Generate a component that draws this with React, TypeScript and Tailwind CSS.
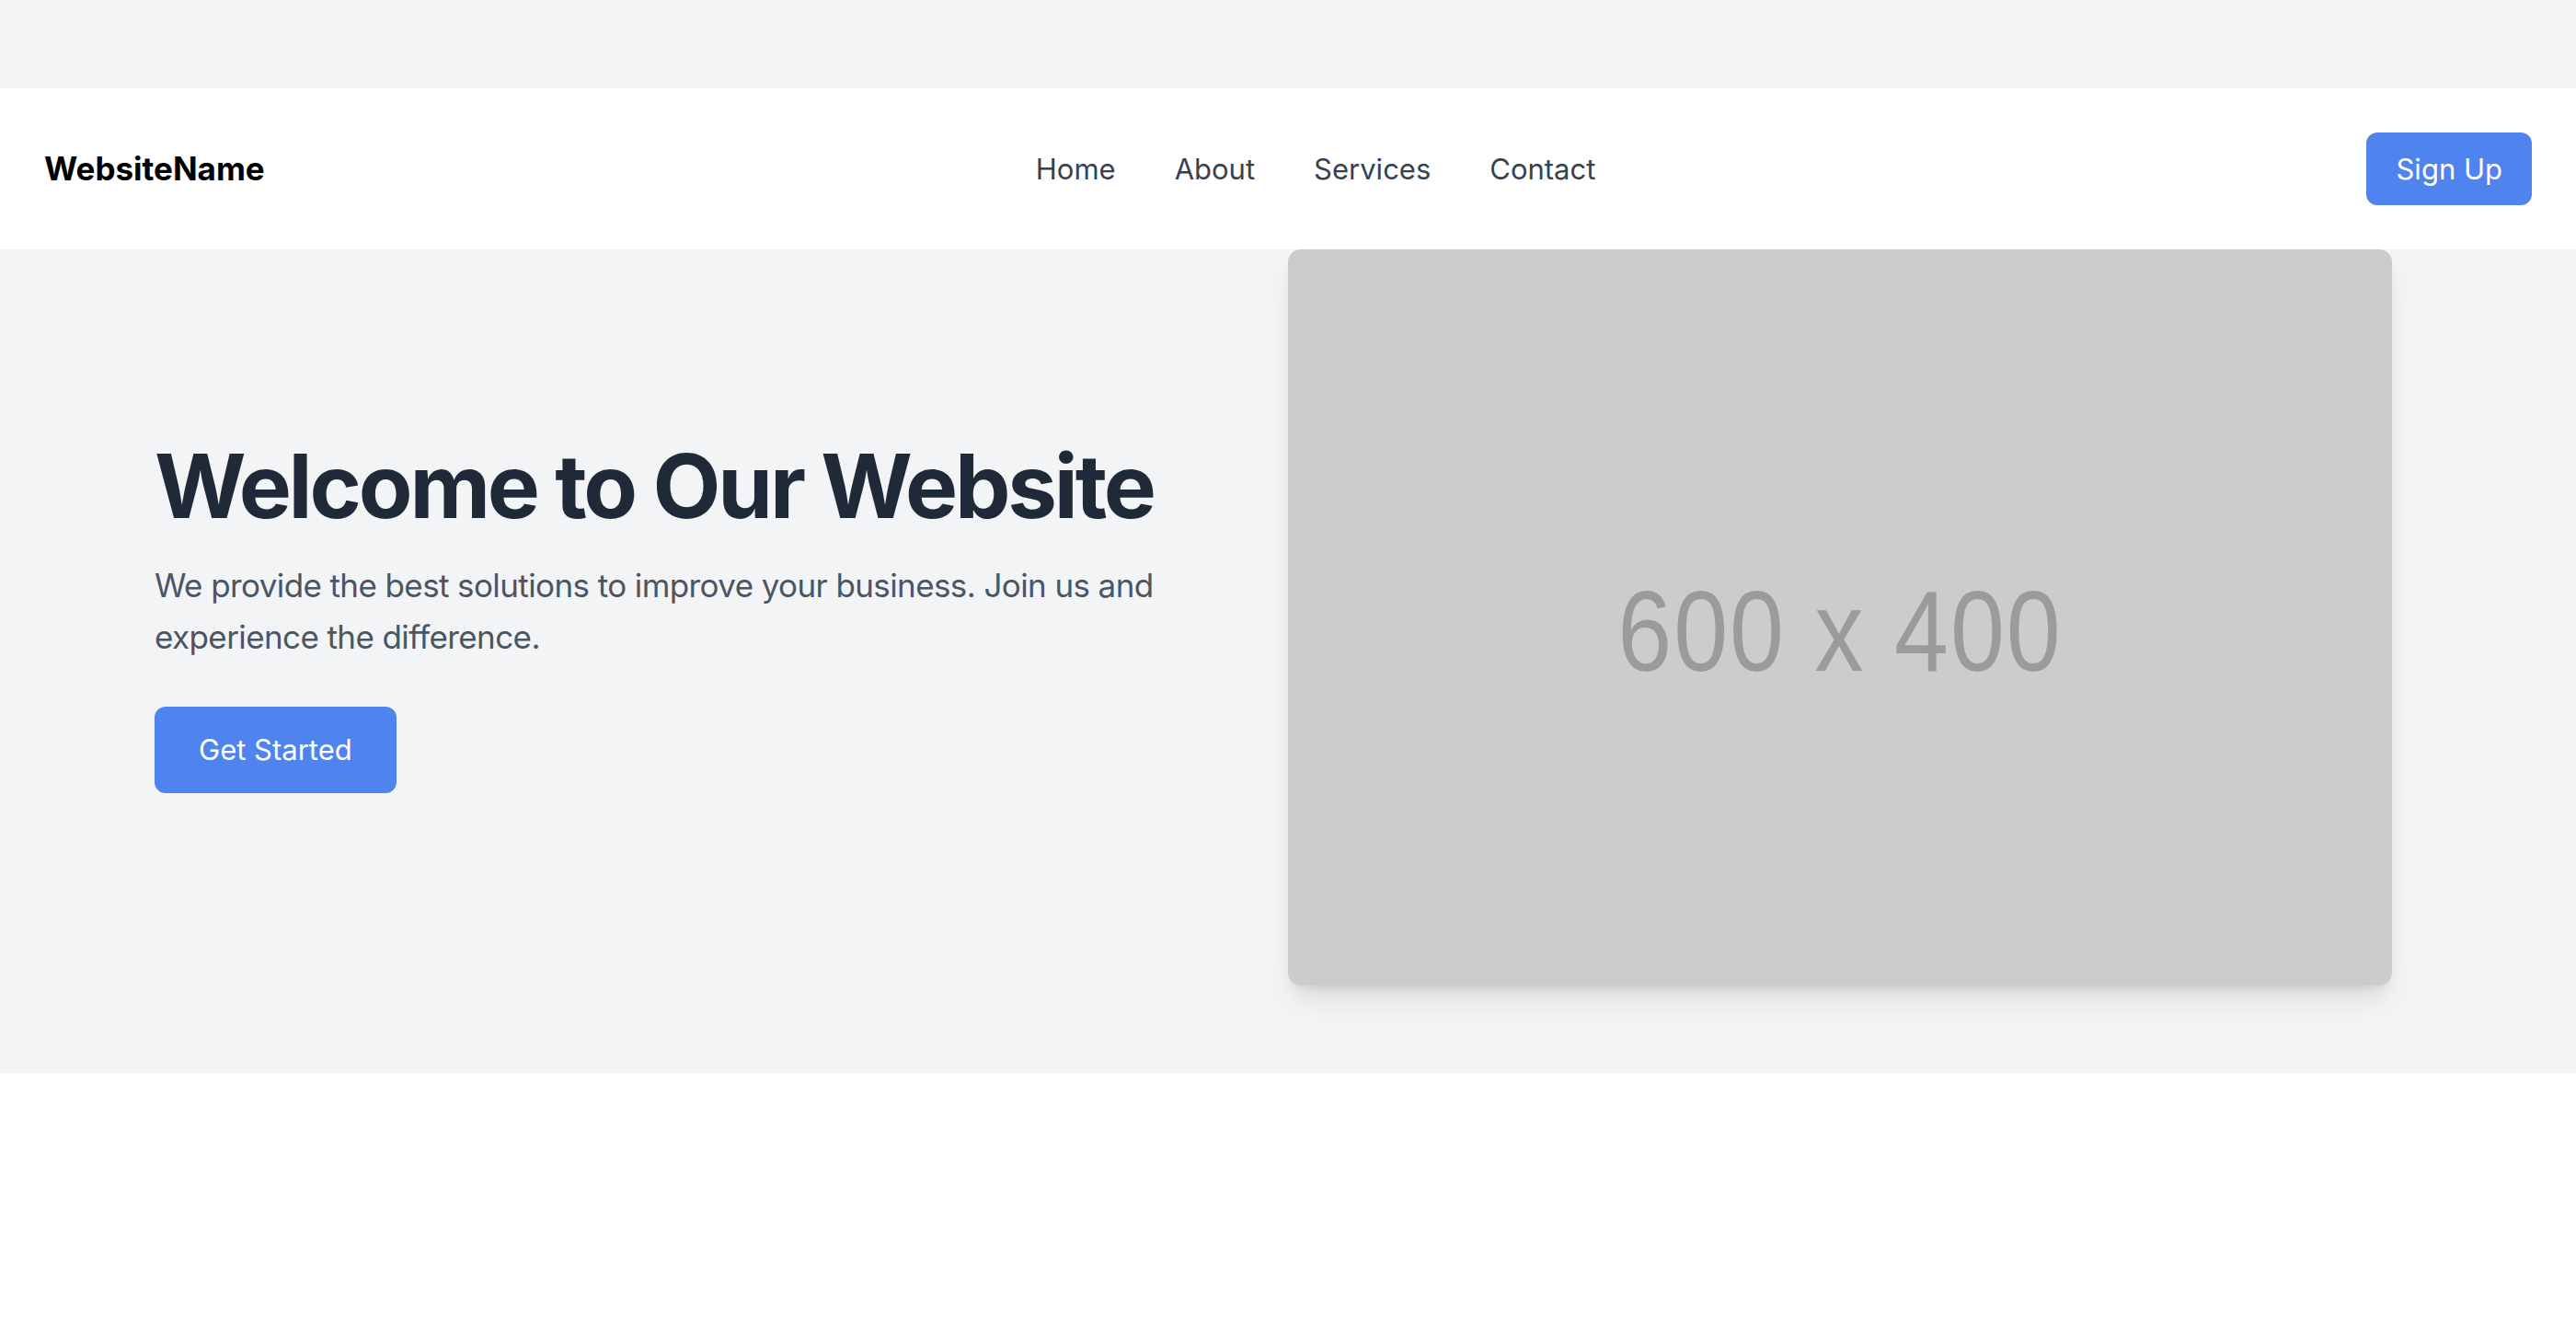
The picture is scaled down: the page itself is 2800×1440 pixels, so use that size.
const navLinks = ['Home', 'About', 'Services', 'Contact'];

const App = () => {
    return (
        <div className="min-h-screen bg-white font-['Inter',sans-serif]">
            {/* top band */}
            <div className="h-[96px] bg-[#f3f4f6]" />

            {/* Navbar */}
            <nav className="bg-white shadow-[0_8px_12px_-2px_rgba(0,0,0,0.1),0_4px_8px_-4px_rgba(0,0,0,0.1)]">
                <div className="h-[175px] px-[48px] flex items-center justify-between">
                    <div className="text-[35px] font-bold text-black">WebsiteName</div>
                    <ul className="flex items-center gap-[64px]">
                        {navLinks.map((link) => (
                            <li key={link}>
                                <a href="#" className="text-[31px] leading-[48px] text-[#374151]">{link}</a>
                            </li>
                        ))}
                    </ul>
                    <button className="h-[79px] px-[32px] rounded-[12px] bg-[#4f83ee] text-white text-[31px] leading-[48px]">
                        Sign Up
                    </button>
                </div>
            </nav>

            {/* Hero */}
            <section className="bg-[#f3f4f6] pb-[95px]">
                <div className="max-w-[2560px] mx-auto px-[48px] flex items-center">
                    <div className="w-1/2 pr-[60px]">
                        <h1 className="text-[96px] leading-[96px] font-bold text-[#1f2937] tracking-[-3.2px] mb-[32px]">
                            Welcome to Our Website
                        </h1>
                        <p className="text-[35px] leading-[56px] text-[#4b5563] tracking-[-0.6px] mb-[48px] max-w-[1150px]">
                            We provide the best solutions to improve your business. Join us and experience the difference.
                        </p>
                        <button className="h-[94px] px-[48px] rounded-[12px] bg-[#4f83ee] text-white text-[31px] leading-[48px]">
                            Get Started
                        </button>
                    </div>
                    <div className="w-1/2">
                        <div className="w-[1200px] h-[800px] rounded-[14px] bg-[#cccccc] shadow-[0_20px_30px_-6px_rgba(0,0,0,0.1),0_8px_12px_-6px_rgba(0,0,0,0.1)] flex items-center justify-center">
                            <span className="mt-[30px] font-['Liberation_Sans',Arial,sans-serif] text-[106px] leading-none text-[#9b9b9b] scale-y-[1.17] blur-[0.6px] tracking-[2px]">
                                600 x 400
                            </span>
                        </div>
                    </div>
                </div>
            </section>
        </div>
    );
};

export default App;
